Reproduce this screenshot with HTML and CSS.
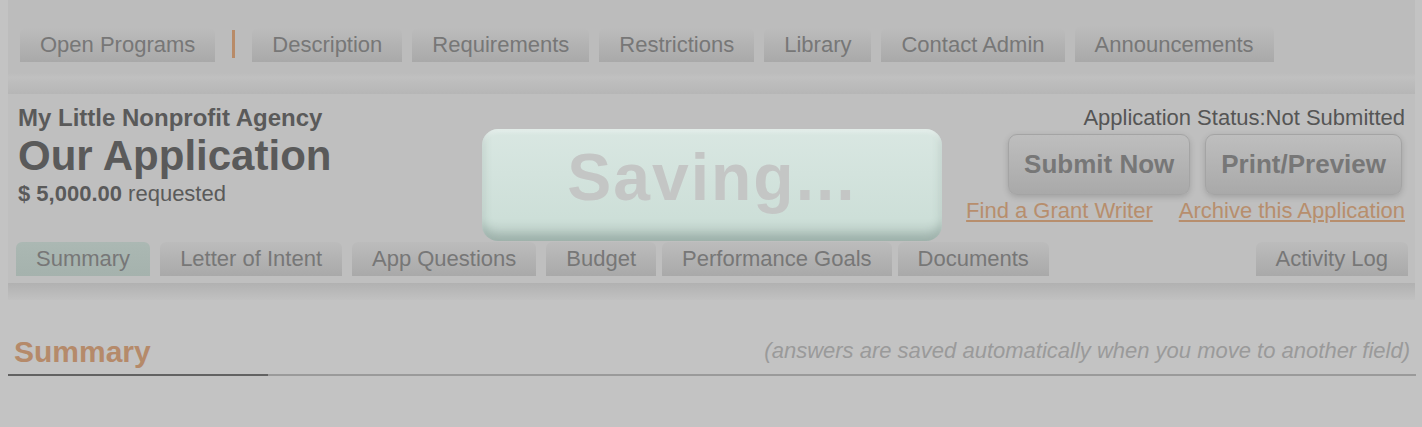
FILE: index.html
```html
<!DOCTYPE html>
<html>
<head>
	<title>Our Application</title>
	<link rel="stylesheet" href="styles.css">
</head>
<body>
<div class="page">
	<div class="topnav">
		<a href="javascript:;" class="tab">Open Programs</a>
		<span class="sep"></span>
		<a href="javascript:;" class="tab">Description</a>
		<a href="javascript:;" class="tab">Requirements</a>
		<a href="javascript:;" class="tab">Restrictions</a>
		<a href="javascript:;" class="tab">Library</a>
		<a href="javascript:;" class="tab">Contact Admin</a>
		<a href="javascript:;" class="tab tab-raised">Announcements</a>
	</div>
	<div class="bar"></div>

	<div class="panel">
		<div class="head">
			<div class="app-info">
				<div class="agency">My Little Nonprofit Agency</div>
				<h1 class="app-title">Our Application</h1>
				<div class="amount"><b>$ 5,000.00</b> requested</div>
			</div>
			<div class="app-actions">
				<div class="status">Application Status:Not Submitted</div>
				<div class="buttons">
					<a href="javascript:;" class="btn">Submit Now</a>
					<a href="javascript:;" class="btn">Print/Preview</a>
				</div>
				<div class="links">
					<a href="javascript:;">Find a Grant Writer</a>
					<a href="javascript:;">Archive this Application</a>
				</div>
			</div>
		</div>
		<div class="subtabs">
			<a href="javascript:;" class="tab active">Summary</a>
			<a href="javascript:;" class="tab">Letter of Intent</a>
			<a href="javascript:;" class="tab">App Questions</a>
			<a href="javascript:;" class="tab">Budget</a>
			<a href="javascript:;" class="tab tab-close">Performance Goals</a>
			<a href="javascript:;" class="tab tab-close">Documents</a>
			<a href="javascript:;" class="tab tab-right">Activity Log</a>
		</div>
	</div>
	<div class="bar bar-bottom"></div>
</div>

<div class="section">
	<div class="section-head">
		<h2 class="section-title">Summary</h2>
		<div class="section-note">(answers are saved automatically when you move to another field)</div>
	</div>
	<div class="rule"><div class="rule-mark"></div></div>
</div>

<!-- saving message, sits over the page -->
<div class="saving">Saving...</div>
</body>
</html>
```

FILE: styles.css
```css
*{margin: 0; padding: 0; text-decoration: none; box-sizing: border-box;}
body{
	background: #c3c3c3;
	font-family: "Liberation Sans", Arial, Helvetica, sans-serif;
	font-size: 22px;
	color: #5a5a5a;
	position: relative;
	height: 427px;
	overflow: hidden;
}
a{ color: inherit; }

.page{
	margin: 0 7px 0 8px;
	background: #bcbcbc;
}

/* tabs */
.topnav{
	display: flex; align-items: flex-end; gap: 10px;
	padding: 26px 12px 11px;
}
.tab{
	display: block;
	height: 34px; line-height: 33px;
	padding: 0 20px;
	border-radius: 6px 6px 0 0;
	background: linear-gradient(#bcbcbc, #a9a9a9);
	color: #777;
	white-space: nowrap;
}
.tab-raised{ height: 36px; padding-top: 2px; }
.sep{
	align-self: center;
	width: 3px; height: 28px;
	margin: 0 7px;
	background: #b88b68;
}

.bar{
	height: 21px;
	background: linear-gradient(#bcbcbc, #c0c0c0 20%, #b6b6b6);
}
.bar-bottom{
	height: 17px;
	background: linear-gradient(#b1b1b1, #c1c1c1);
}

/* application header */
.panel{
	background: #bfbfbf;
	padding: 10px 7px 7px 8px;
}
.head{
	display: flex; justify-content: space-between;
	padding: 0 3px 0 2px;
}
.agency{ font-size: 24px; font-weight: bold; line-height: 28px; }
.app-title{ font-size: 42px; line-height: 48px; }
.amount{ line-height: 27px; }

.app-actions{ text-align: right; }
.status{ line-height: 28px; color: #555; }
.buttons{
	display: flex; justify-content: flex-end; gap: 15px;
	margin-top: 2px; padding-right: 3px;
}
.btn{
	display: block;
	height: 61px; line-height: 59px;
	padding: 0 15px;
	border: 1px solid #a4a4a4; border-radius: 9px;
	background: linear-gradient(#bebebe, #a9a9a9);
	box-shadow: 0 2px 6px rgba(0,0,0,.16);
	font-size: 26px; font-weight: bold;
	color: #777;
}
.links{
	display: flex; justify-content: flex-end; gap: 26px;
	margin-top: 2px;
	line-height: 28px;
}
.links a{ color: #b78e6d; text-decoration: underline; }

.subtabs{
	display: flex; gap: 10px;
	margin-top: 17px;
}
.subtabs .active{ background: linear-gradient(#abb8b3, #a5b2ad); }
.tab-close{ margin-left: -4px; }
.tab-right{ margin-left: auto; }

/* section title */
.section{ margin: 34px 6px 0 8px; }
.section-head{
	display: flex; justify-content: space-between; align-items: flex-end;
	padding: 0 6px 4px 6px;
}
.section-title{
	font-size: 30px; line-height: 36px;
	color: #b58a6a;
}
.section-note{
	font-style: italic; line-height: 28px;
	color: #9a9a9a;
	margin-bottom: 5px;
}
.rule{ height: 2px; background: #9a9a9a; }
.rule-mark{ width: 260px; height: 2px; background: #626262; }

/* overlay */
.saving{
	position: absolute; z-index: 2;
	left: 482px; top: 129px;
	width: 460px; height: 112px;
	padding-top: 4px;
	border-radius: 16px;
	background: linear-gradient(#d9e7e2, #cddfd8 80%, #bccdc7);
	box-shadow: inset 0 -8px 10px rgba(70,95,88,.26), inset 0 3px 4px rgba(255,255,255,.35);
	text-align: center;
	font-size: 66px; font-weight: bold; line-height: 89px;
	letter-spacing: 2px;
	color: #c4c6c5;
}
```
